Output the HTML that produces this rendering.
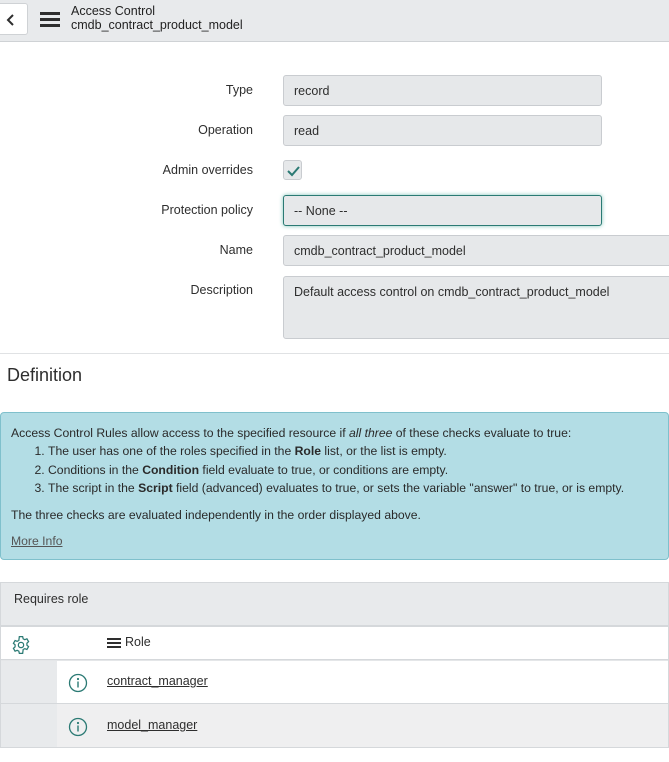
<!DOCTYPE html>
<html><head><style>
*{box-sizing:border-box;margin:0;padding:0}
body{width:669px;height:762px;background:#fff;font-family:"Liberation Sans",sans-serif;color:#2e2e2e;position:relative;overflow:hidden;font-size:12.5px}
.hdr{position:absolute;left:0;top:0;width:669px;height:42px;background:#e8eaec;border-bottom:1px solid #cfd2d5}
.back{position:absolute;left:-4px;top:3px;width:32px;height:32px;background:#fff;border:1px solid #cfd2d5;border-radius:3px}
.ham{position:absolute;left:40px;width:20px;height:3px;background:#2e2e2e}
.t1{position:absolute;left:71px;top:4px;font-size:12.5px;color:#222}
.t2{position:absolute;left:71px;top:18px;font-size:12.5px;color:#222}
.lbl{position:absolute;right:416px;font-size:12.5px;color:#2e2e2e;text-align:right}
.inp{position:absolute;left:283px;width:319px;height:31px;background:#e6e8ea;border:1px solid #c9ccd0;border-radius:3px;padding:8px 10px;font-size:12.5px}
.sep{position:absolute;left:0;top:353px;width:669px;height:1px;background:#e0e2e4}
.def{position:absolute;left:7px;top:365px;font-size:18px;color:#2e2e2e}
.info{position:absolute;left:0;top:412px;width:669px;height:148px;background:#b3dde5;border:1px solid #7fc0cc;border-radius:4px;padding:11px 10px;font-size:12.2px;line-height:18.4px;color:#2a2a2a}
.info ol{margin-left:37px}
.info p.m{margin-top:8px}
.panel{position:absolute;left:0;top:582px;width:669px;height:166px;border:1px solid #d5d8db}
</style></head><body>
<div class="hdr">
 <div class="back"><svg width="32" height="32" viewBox="0 0 32 32" style="position:absolute;left:2px;top:0"><path d="M14 11 L9 16 L14 21" stroke="#2e2e2e" stroke-width="2" fill="none"/></svg></div>
 <div class="ham" style="top:12px"></div><div class="ham" style="top:18px"></div><div class="ham" style="top:24px"></div>
 <div class="t1">Access Control</div>
 <div class="t2">cmdb_contract_product_model</div>
</div>
<div class="lbl" style="top:83px">Type</div>
<div class="inp" style="top:75px">record</div>
<div class="lbl" style="top:123px">Operation</div>
<div class="inp" style="top:115px">read</div>
<div class="lbl" style="top:163px">Admin overrides</div>
<div style="position:absolute;left:283px;top:160px;width:19px;height:20px;background:#e6e8ea;border:1px solid #c9ccd0;border-radius:3px"><svg width="19" height="20"><path d="M4 10 L8 14 L15 6" stroke="#2b7a74" stroke-width="2" fill="none"/></svg></div>
<div class="lbl" style="top:203px">Protection policy</div>
<div class="inp" style="top:195px;border:1px solid #2b7a74;box-shadow:0 0 4px #7fc4b8">-- None --</div>
<div class="lbl" style="top:243px">Name</div>
<div class="inp" style="top:235px;width:390px">cmdb_contract_product_model</div>
<div class="lbl" style="top:283px">Description</div>
<div class="inp" style="top:276px;width:390px;height:63px">Default access control on cmdb_contract_product_model</div>
<div class="sep"></div>
<div class="def">Definition</div>
<div class="info">
 <div>Access Control Rules allow access to the specified resource if <i>all three</i> of these checks evaluate to true:</div>
 <ol>
  <li>The user has one of the roles specified in the <b>Role</b> list, or the list is empty.</li>
  <li>Conditions in the <b>Condition</b> field evaluate to true, or conditions are empty.</li>
  <li>The script in the <b>Script</b> field (advanced) evaluates to true, or sets the variable "answer" to true, or is empty.</li>
 </ol>
 <p class="m">The three checks are evaluated independently in the order displayed above.</p>
 <p class="m"><u style="color:#555">More Info</u></p>
</div>
<div class="panel">
 <div style="position:absolute;left:0;top:0;width:667px;height:44px;background:#e8eaec;border-bottom:2px solid #d5d8db"></div>
 <div style="position:absolute;left:13px;top:9px;font-size:12.5px">Requires role</div>
 <svg style="position:absolute;left:10px;top:52px" width="20" height="20" viewBox="0 0 24 24"><path d="M10 2h4l.6 2.6 2 1 2.5-1 2 3.4-2 1.8v2.4l2 1.8-2 3.4-2.5-1-2 1L14 22h-4l-.6-2.6-2-1-2.5 1-2-3.4 2-1.8v-2.4l-2-1.8 2-3.4 2.5 1 2-1z" fill="none" stroke="#2b7a74" stroke-width="1.5"/><circle cx="12" cy="12" r="3.2" fill="none" stroke="#2b7a74" stroke-width="1.5"/></svg>
 <div style="position:absolute;left:106px;top:55px;width:14px;height:2px;background:#2e2e2e;box-shadow:0 4px 0 #2e2e2e,0 8px 0 #2e2e2e"></div>
 <div style="position:absolute;left:124px;top:52px;font-size:12.5px">Role</div>
 <div style="position:absolute;left:0;top:76px;width:667px;height:1px;background:#d5d8db;box-shadow:0 1px 0 #e4e6e8"></div>
 <div style="position:absolute;left:0;top:78px;width:56px;height:86px;background:#e8eaec"></div>
 <div style="position:absolute;left:56px;top:121px;width:611px;height:43px;background:#efeff0"></div>
 <div style="position:absolute;left:0;top:120px;width:667px;height:1px;background:#d5d8db"></div>
 <svg style="position:absolute;left:67px;top:90px" width="20" height="20"><circle cx="10" cy="10" r="8.5" fill="none" stroke="#2b7a74" stroke-width="1.3"/><circle cx="10" cy="6" r="1.1" fill="#2b7a74"/><rect x="9.3" y="8.5" width="1.4" height="6" fill="#2b7a74"/></svg>
 <div style="position:absolute;left:106px;top:91px;text-decoration:underline">contract_manager</div>
 <svg style="position:absolute;left:67px;top:134px" width="20" height="20"><circle cx="10" cy="10" r="8.5" fill="none" stroke="#2b7a74" stroke-width="1.3"/><circle cx="10" cy="6" r="1.1" fill="#2b7a74"/><rect x="9.3" y="8.5" width="1.4" height="6" fill="#2b7a74"/></svg>
 <div style="position:absolute;left:106px;top:135px;text-decoration:underline">model_manager</div>
</div>
</body></html>
